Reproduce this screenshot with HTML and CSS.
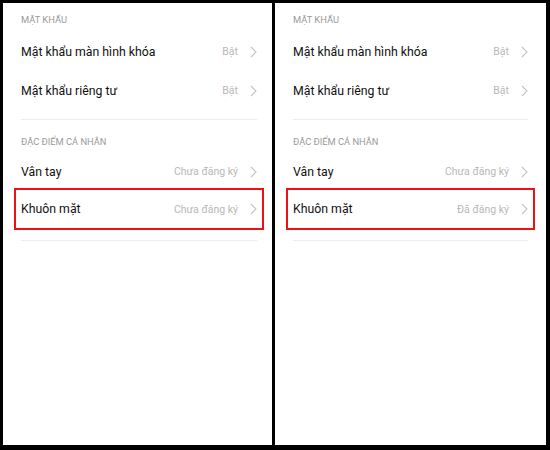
FILE: index.html
```html
<!DOCTYPE html>
<html lang="vi">
<head>
<meta charset="utf-8">
<link rel="stylesheet" href="styles.css">
</head>
<body>
<div class="frame">
  <section class="panel panel-left">
    <div class="group-title first">MẶT KHẨU</div>
    <div class="row"><span class="label">Mật khẩu màn hình khóa</span><span class="value">Bật</span><svg class="chev" viewBox="0 0 7 12"><polyline points="1,1 6,6 1,11"/></svg></div>
    <div class="row"><span class="label">Mật khẩu riêng tư</span><span class="value">Bật</span><svg class="chev" viewBox="0 0 7 12"><polyline points="1,1 6,6 1,11"/></svg></div>
    <div class="divider"></div>
    <div class="group-title">ĐẶC ĐIỂM CÁ NHÂN</div>
    <div class="row"><span class="label">Vân tay</span><span class="value">Chưa đăng ký</span><svg class="chev" viewBox="0 0 7 12"><polyline points="1,1 6,6 1,11"/></svg></div>
    <div class="row highlight"><span class="label">Khuôn mặt</span><span class="value">Chưa đăng ký</span><svg class="chev" viewBox="0 0 7 12"><polyline points="1,1 6,6 1,11"/></svg></div>
    <div class="divider last"></div>
  </section>
  <section class="panel panel-right">
    <div class="group-title first">MẶT KHẨU</div>
    <div class="row"><span class="label">Mật khẩu màn hình khóa</span><span class="value">Bật</span><svg class="chev" viewBox="0 0 7 12"><polyline points="1,1 6,6 1,11"/></svg></div>
    <div class="row"><span class="label">Mật khẩu riêng tư</span><span class="value">Bật</span><svg class="chev" viewBox="0 0 7 12"><polyline points="1,1 6,6 1,11"/></svg></div>
    <div class="divider"></div>
    <div class="group-title">ĐẶC ĐIỂM CÁ NHÂN</div>
    <div class="row"><span class="label">Vân tay</span><span class="value">Chưa đăng ký</span><svg class="chev" viewBox="0 0 7 12"><polyline points="1,1 6,6 1,11"/></svg></div>
    <div class="row highlight"><span class="label">Khuôn mặt</span><span class="value">Đã đăng ký</span><svg class="chev" viewBox="0 0 7 12"><polyline points="1,1 6,6 1,11"/></svg></div>
    <div class="divider last"></div>
  </section>
</div>
</body>
</html>
```

FILE: styles.css
```css
html, body {
  margin: 0;
  padding: 0;
  background: #000;
}
body {
  width: 550px;
  height: 450px;
  overflow: hidden;
  font-family: Roboto, "Noto Sans", "Liberation Sans", sans-serif;
}
.frame {
  display: flex;
  gap: 3px;
  padding: 3px 4px 0 3px;
  height: 442px;
}
.panel {
  background: #fff;
  height: 442px;
  box-sizing: border-box;
  padding-top: 11px;
}
.panel-left {
  width: 269px;
  padding-left: 18px;
  padding-right: 15px;
}
.panel-right {
  width: 271px;
  padding-left: 18px;
  padding-right: 18px;
}
.group-title {
  font-size: 9.3px;
  line-height: 12px;
  height: 12px;
  color: #9a9a9a;
}
.group-title.first {
  margin-bottom: 6px;
}
.group-title:not(.first) {
  margin-top: 16px;
  margin-bottom: 4px;
}
.row {
  display: flex;
  align-items: center;
  height: 39px;
}
.label {
  flex: 1;
  font-size: 12.3px;
  color: #111;
}
.value {
  font-size: 10.5px;
  color: #b8b8b8;
}
.chev {
  width: 7px;
  height: 12px;
  margin-left: 12px;
  flex: none;
}
.chev polyline {
  fill: none;
  stroke: #c4c4c4;
  stroke-width: 1.1;
}
.row.highlight {
  box-sizing: border-box;
  height: 42px;
  margin: -3px -7px 0;
  padding: 0 5px;
  border: 2px solid #ee1111;
}
.divider {
  height: 1px;
  background: #ececec;
  margin-top: 9px;
}
.divider.last {
  margin-top: 10px;
}
```
